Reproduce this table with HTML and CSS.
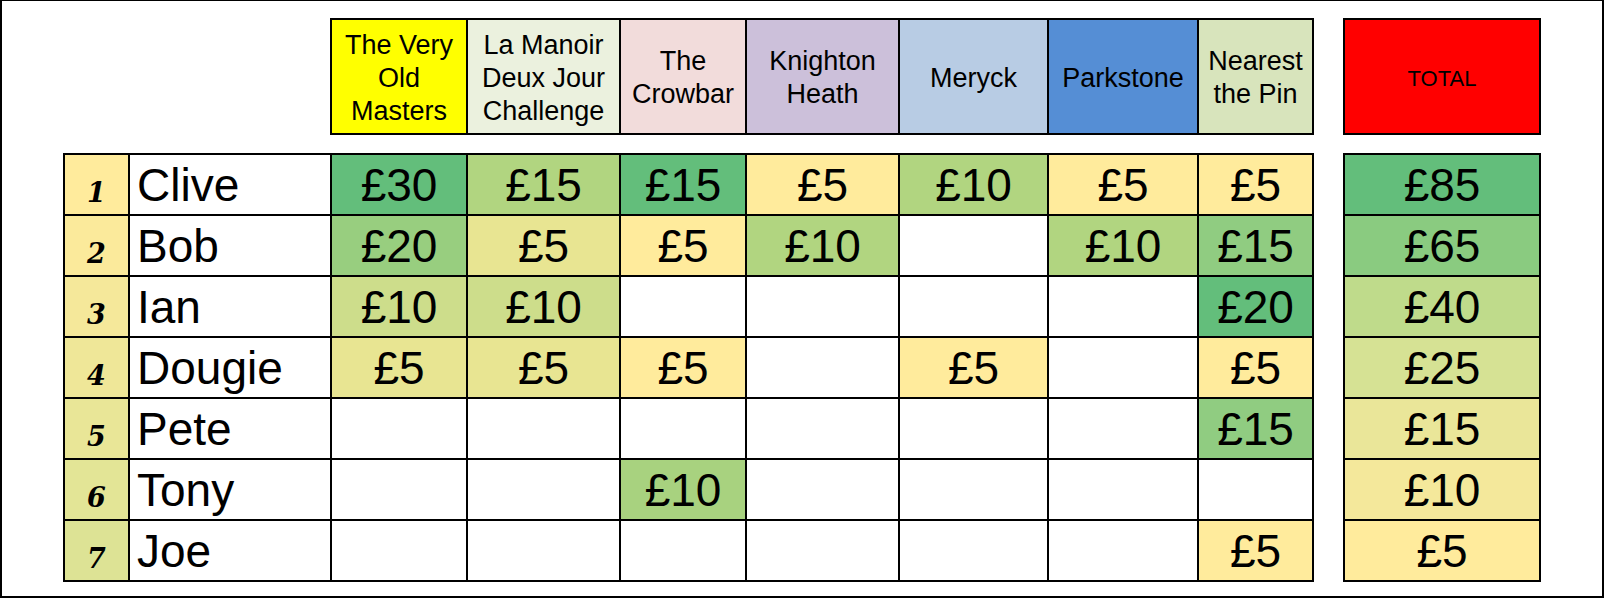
FILE: index.html
```html
<!DOCTYPE html>
<html lang="en">
<head>
<meta charset="utf-8">
<title>Golf Winnings</title>
<link rel="stylesheet" href="styles.css">
</head>
<body>
<div class="frame">
  <div class="board">
    <div class="heads">
      <div class="h h-yellow">The Very<br>Old<br>Masters</div>
      <div class="h h-manoir">La Manoir<br>Deux Jour<br>Challenge</div>
      <div class="h h-crowbar">The<br>Crowbar</div>
      <div class="h h-knighton">Knighton<br>Heath</div>
      <div class="h h-meryck">Meryck</div>
      <div class="h h-park">Parkstone</div>
      <div class="h h-pin">Nearest<br>the Pin</div>
    </div>
    <div class="rows">
      <div class="n n1">1</div><div class="name">Clive</div>
      <div class="v g5">£30</div><div class="v g2">£15</div><div class="v g5">£15</div><div class="v y">£5</div><div class="v g2">£10</div><div class="v y">£5</div><div class="v y">£5</div>

      <div class="n n2">2</div><div class="name">Bob</div>
      <div class="v g3">£20</div><div class="v yg">£5</div><div class="v y">£5</div><div class="v g2">£10</div><div class="v"></div><div class="v g2">£10</div><div class="v g4">£15</div>

      <div class="n n3">3</div><div class="name">Ian</div>
      <div class="v g1">£10</div><div class="v g1">£10</div><div class="v"></div><div class="v"></div><div class="v"></div><div class="v"></div><div class="v g5">£20</div>

      <div class="n n4">4</div><div class="name">Dougie</div>
      <div class="v yg">£5</div><div class="v yg">£5</div><div class="v y">£5</div><div class="v"></div><div class="v y">£5</div><div class="v"></div><div class="v y">£5</div>

      <div class="n n5">5</div><div class="name">Pete</div>
      <div class="v"></div><div class="v"></div><div class="v"></div><div class="v"></div><div class="v"></div><div class="v"></div><div class="v g4">£15</div>

      <div class="n n6">6</div><div class="name">Tony</div>
      <div class="v"></div><div class="v"></div><div class="v g2b">£10</div><div class="v"></div><div class="v"></div><div class="v"></div><div class="v"></div>

      <div class="n n7">7</div><div class="name">Joe</div>
      <div class="v"></div><div class="v"></div><div class="v"></div><div class="v"></div><div class="v"></div><div class="v"></div><div class="v y">£5</div>
    </div>
  </div>
  <div class="totals">
    <div class="total-head"><div class="h h-total">TOTAL</div></div>
    <div class="total-rows">
      <div class="v t1">£85</div>
      <div class="v t2">£65</div>
      <div class="v t3">£40</div>
      <div class="v t4">£25</div>
      <div class="v t5">£15</div>
      <div class="v t6">£10</div>
      <div class="v t7">£5</div>
    </div>
  </div>
</div>
</body>
</html>
```

FILE: styles.css
```css
* { box-sizing: border-box; }

html, body {
  margin: 0;
  padding: 0;
  background: #fff;
}

body {
  font-family: "Liberation Sans", Arial, sans-serif;
  color: #000;
}

.frame {
  width: 1604px;
  height: 598px;
  border: 2px solid #000;
  border-top-width: 1px;
  display: flex;
  align-items: flex-start;
  padding: 17px 0 0 61px;
}

.board {
  display: flex;
  flex-direction: column;
}

.heads {
  margin-left: 267px;
  display: grid;
  grid-template-columns: 134px 151px 124px 151px 147px 148px 113px;
  grid-template-rows: 113px;
  gap: 2px;
  background: #000;
  border: 2px solid #000;
}

.h {
  display: flex;
  align-items: center;
  justify-content: center;
  text-align: center;
  font-size: 27px;
  line-height: 33px;
  padding-top: 3px;
}

.h-yellow { background: #ffff00; }
.h-manoir { background: #ebf1de; }
.h-crowbar { background: #f2dcdb; }
.h-knighton { background: #ccc0da; }
.h-meryck { background: #b8cce4; }
.h-park { background: #558ed5; }
.h-pin { background: #d8e4bc; }
.h-total { background: #ff0000; font-size: 22px; }

.rows {
  margin-top: 18px;
  display: grid;
  grid-template-columns: 63px 200px 134px 151px 124px 151px 147px 148px 113px;
  grid-auto-rows: 59px;
  gap: 2px;
  background: #000;
  border: 2px solid #000;
}

.n {
  text-align: center;
  font-family: "DejaVu Serif", "Liberation Serif", serif;
  font-style: italic;
  font-weight: bold;
  font-size: 27px;
  line-height: 59px;
  padding-top: 8px;
}

.n1 { background: #ffeb9c; }
.n2 { background: #fbea9b; }
.n3 { background: #f5e89a; }
.n4 { background: #efe798; }
.n5 { background: #e9e697; }
.n6 { background: #e3e596; }
.n7 { background: #dde395; }

.name {
  background: #fff;
  font-size: 46px;
  line-height: 57px;
  padding: 2px 0 0 7px;
}

.v {
  background: #fff;
  text-align: center;
  font-size: 46px;
  line-height: 57px;
  padding-top: 2px;
}

.g5 { background: #63be7b; }
.g4 { background: #90cc81; }
.g3 { background: #98ce7f; }
.g2 { background: #b1d580; }
.g2b { background: #a8d27f; }
.g1 { background: #cddd8b; }
.yg { background: #e8e592; }
.y { background: #ffeb9c; }

.totals {
  margin-left: 29px;
  display: flex;
  flex-direction: column;
}

.total-head {
  display: grid;
  grid-template-columns: 194px;
  grid-template-rows: 113px;
  border: 2px solid #000;
  background: #000;
}

.total-rows {
  margin-top: 18px;
  display: grid;
  grid-template-columns: 194px;
  grid-auto-rows: 59px;
  gap: 2px;
  background: #000;
  border: 2px solid #000;
}

.t1 { background: #63be7b; }
.t2 { background: #8acb80; }
.t3 { background: #bfdb8b; }
.t4 { background: #d6e294; }
.t5 { background: #eae699; }
.t6 { background: #f4e89b; }
.t7 { background: #ffeb9c; }
```
